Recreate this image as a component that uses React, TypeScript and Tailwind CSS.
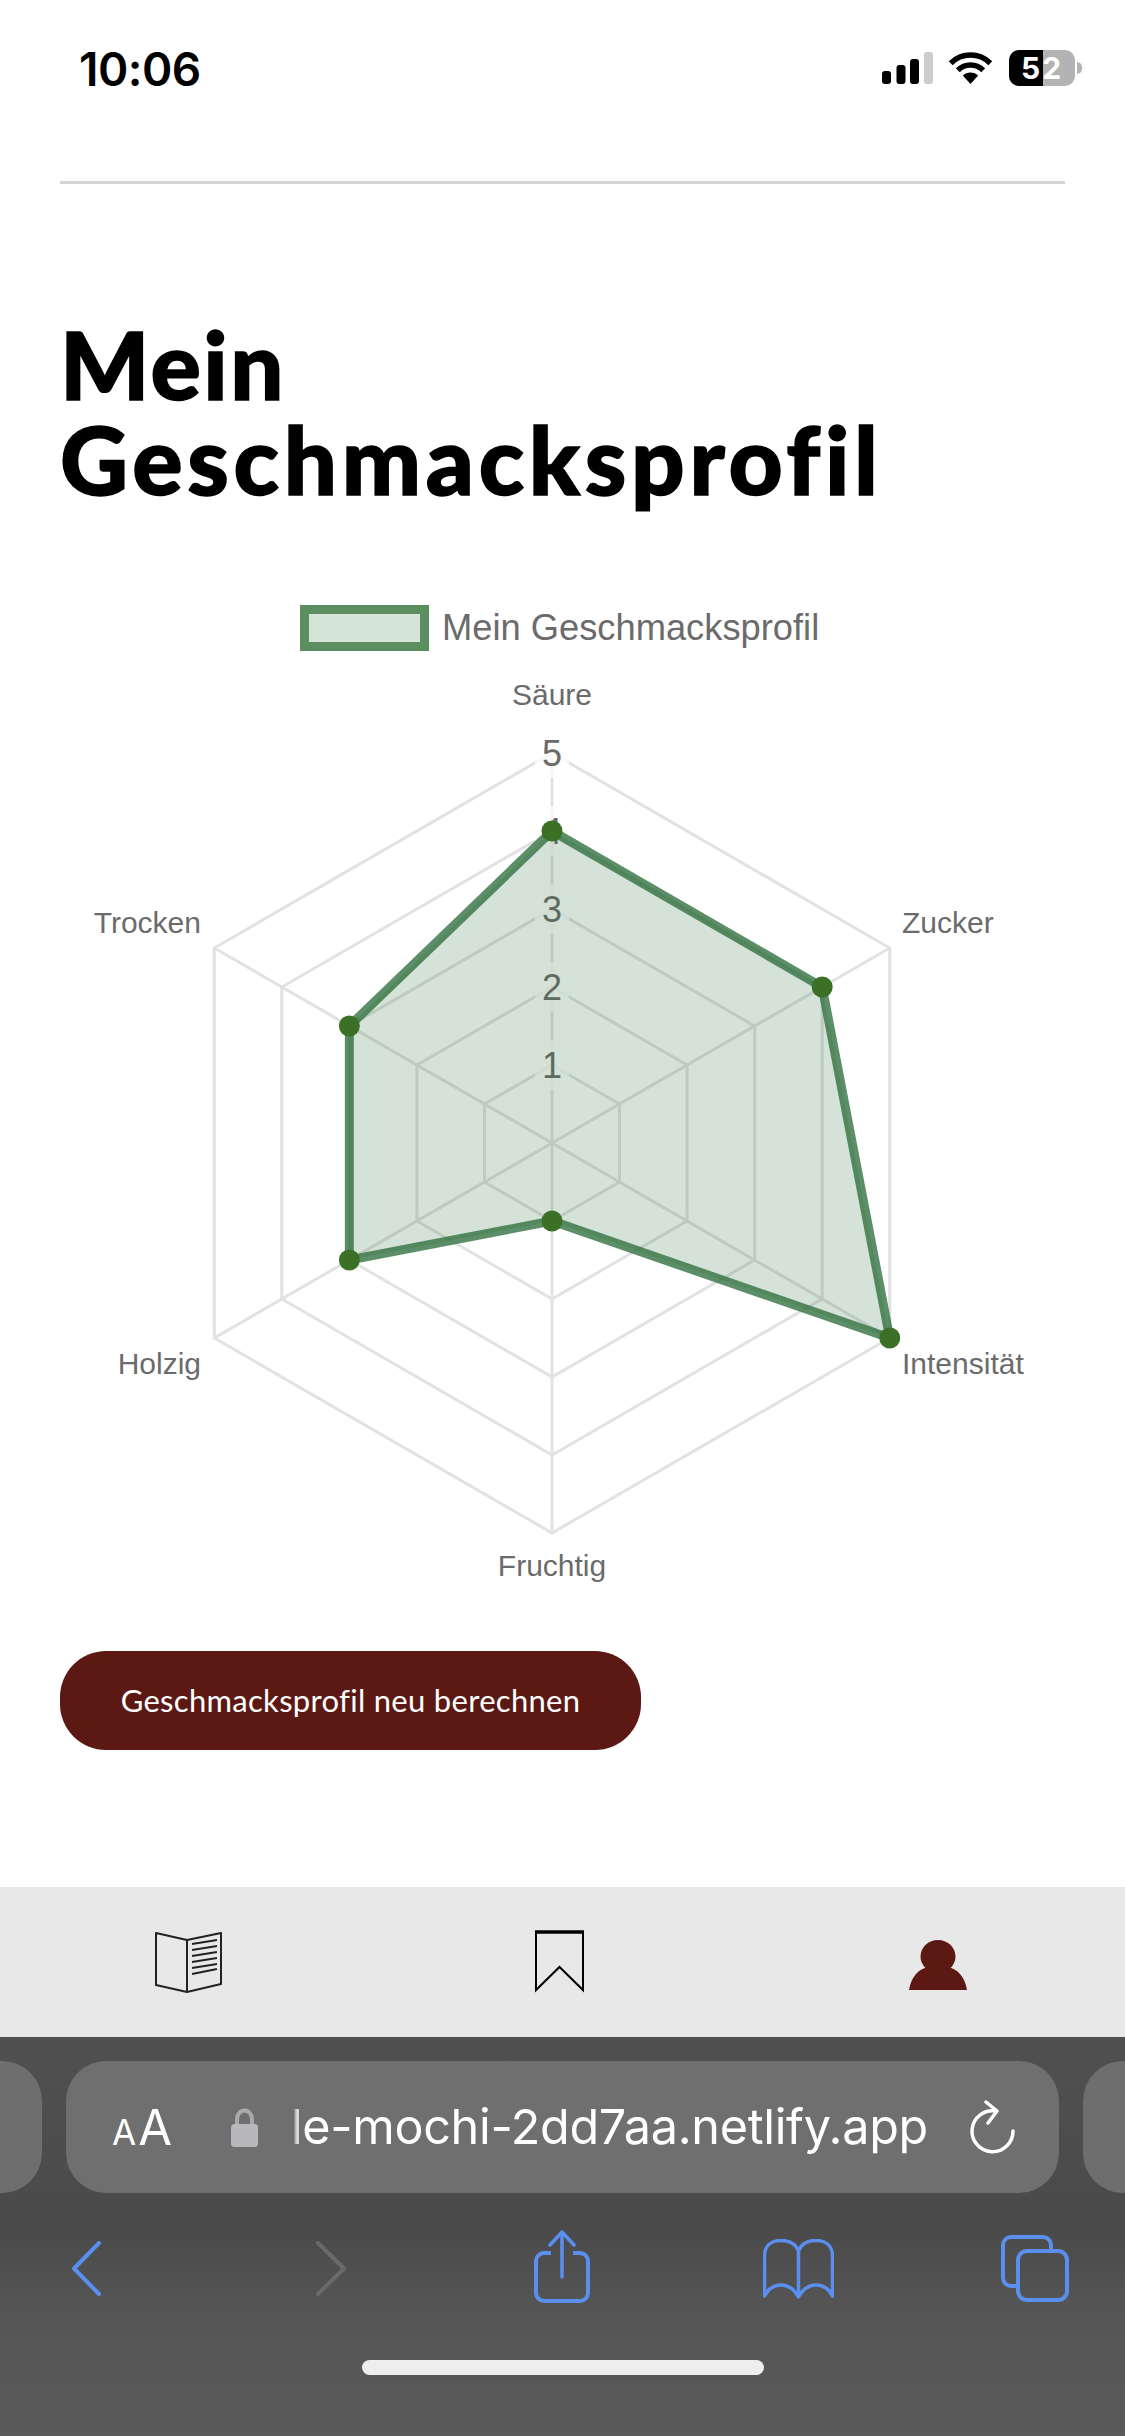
import React from "react";

const cx = 552;
const cy = 1143;
const R = 390;
const angles = [0, 1, 2, 3, 4, 5].map((i) => (i * Math.PI) / 3);
const pt = (i: number, v: number) => {
  const r = (R * v) / 5;
  return [cx + r * Math.sin(angles[i]), cy - r * Math.cos(angles[i])];
};
const ring = (v: number) => angles.map((_, i) => pt(i, v).join(",")).join(" ");
const data = [4, 4, 5, 1, 3, 3];
const dataPts = data.map((v, i) => pt(i, v));

const labels = [
  { t: "Säure", x: 552, y: 705, a: "middle" },
  { t: "Zucker", x: 902, y: 933, a: "start" },
  { t: "Intensität", x: 902, y: 1374, a: "start" },
  { t: "Fruchtig", x: 552, y: 1576, a: "middle" },
  { t: "Holzig", x: 201, y: 1374, a: "end" },
  { t: "Trocken", x: 201, y: 933, a: "end" },
];

function Radar() {
  return (
    <svg viewBox="0 660 1125 940" className="block w-[1125px] h-[940px]" fontFamily="'Liberation Sans', sans-serif">
      {[1, 2, 3, 4, 5].map((v) => (
        <polygon key={v} points={ring(v)} fill="none" stroke="#e2e2e2" strokeWidth="3" />
      ))}
      {angles.map((_, i) => {
        const [x, y] = pt(i, 5);
        return <line key={i} x1={cx} y1={cy} x2={x} y2={y} stroke="#e2e2e2" strokeWidth="3" />;
      })}
      {[1, 2, 3, 4, 5].map((v) => {
        const y = cy - (R * v) / 5;
        return (
          <g key={v}>
            <rect x={cx - 17} y={y - 25} width="34" height="50" fill="#ffffff" fillOpacity="0.75" />
            <text x={cx} y={y + 13} textAnchor="middle" fontSize="36" fill="#6b6b6b">
              {v}
            </text>
          </g>
        );
      })}
      <polygon
        points={dataPts.map((p) => p.join(",")).join(" ")}
        fill="#2e6e3c"
        fillOpacity="0.2"
        stroke="#2e6e3c"
        strokeOpacity="0.78"
        strokeWidth="9"
        strokeLinejoin="miter"
      />
      {dataPts.map((p, i) => (
        <circle key={i} cx={p[0]} cy={p[1]} r="10.5" fill="#3b7026" />
      ))}
      {labels.map((l) => (
        <text key={l.t} x={l.x} y={l.y} textAnchor={l.a as "start" | "middle" | "end"} fontSize="30" fill="#6b6b6b">
          {l.t}
        </text>
      ))}
    </svg>
  );
}

function StatusBar() {
  return (
    <div className="h-[181px] flex items-start justify-between pt-[45px] pl-[79px] pr-[43px]">
      <span className="font-['Inter',sans-serif] font-semibold text-[46px] leading-[48px] text-black tracking-[-0.5px]">10:06</span>
      <div className="flex items-center pt-[5px]">
        <svg width="52" height="34" viewBox="0 0 52 34">
          <rect x="0" y="20" width="9" height="13" rx="3" fill="#000" />
          <rect x="14.5" y="14" width="9" height="19" rx="3" fill="#000" />
          <rect x="28" y="8" width="9" height="25" rx="3" fill="#000" />
          <rect x="42" y="1" width="9" height="32" rx="3" fill="#cdcdcd" />
        </svg>
        <svg width="45" height="32" viewBox="0 0 45 32" className="ml-[14px]">
          <path d="M22.5 32 L14.8 23.6 A11 11 0 0 1 30.2 23.6 Z" fill="#000" />
          <path d="M9.8 18.3 A18 18 0 0 1 35.2 18.3" fill="none" stroke="#000" strokeWidth="5.5" />
          <path d="M2.7 11.2 A28 28 0 0 1 42.3 11.2" fill="none" stroke="#000" strokeWidth="5.5" />
        </svg>
        <div className="flex items-center gap-[2px] ml-[16px]">
          <div className="relative w-[66px] h-[36px] rounded-[10px] overflow-hidden flex bg-[#b3b3b3]">
            <div className="w-[34px] h-full bg-black" />
            <span className="absolute inset-0 flex items-center justify-center font-['Inter',sans-serif] font-bold text-[30px] tracking-[2px] text-white">52</span>
          </div>
          <div className="w-[5px] h-[12px] rounded-r-full bg-[#b3b3b3]" />
        </div>
      </div>
    </div>
  );
}

function NavBar() {
  return (
    <div className="h-[150px] bg-[#e8e8e8] grid grid-cols-3 items-center justify-items-center">
      <svg width="67" height="61" viewBox="0 0 67 61" fill="none" stroke="#222" strokeWidth="2" className="ml-[2px]">
        <path d="M1 1 L32 8 L66 1 V52 L32 60 L1 53 Z" strokeLinejoin="round" />
        <path d="M32 8 V60" />
        <path d="M37 12 L62 8 M37 18 L62 14 M37 24 L62 20 M37 30 L62 26 M37 36 L62 32 M37 42 L62 37" strokeWidth="1.8" />
      </svg>
      <svg width="49" height="64" viewBox="0 0 49 64" fill="none" stroke="#000" strokeWidth="2" className="mr-[6px]">
        <path d="M1 2 H48 V60 L24.5 37 L1 60 Z" />
        <path d="M0 2 H49" strokeWidth="3.5" />
      </svg>
      <svg width="58" height="50" viewBox="0 0 58 50" fill="#5c1914" className="mt-[6px]">
        <ellipse cx="29" cy="16.5" rx="17.5" ry="16.5" />
        <path d="M0 50 C2 37 10 28 20 27 H38 C48 28 56 37 58 50 Z" />
      </svg>
    </div>
  );
}

function UrlRow() {
  return (
    <div className="h-[132px] mt-[24px] flex gap-[24px] overflow-hidden">
      <div className="w-[42px] shrink-0 rounded-r-[40px] bg-[#6e6e6e]" />
      <div className="w-[993px] shrink-0 rounded-[40px] bg-[#6f6f6f] flex items-center text-white pl-[46px] font-['Inter',sans-serif]">
        <span className="flex items-baseline leading-none w-[58px]">
          <span className="text-[35px] mr-[2px]">A</span>
          <span className="text-[49px]">A</span>
        </span>
        <svg width="27" height="39" viewBox="0 0 27 39" className="ml-[61px]">
          <path d="M6 17 V11 A7.5 8.5 0 0 1 21 11 V17" fill="none" stroke="#a9a9ae" strokeWidth="4" />
          <rect x="0" y="16" width="27" height="23" rx="3.5" fill="#b7b7bc" />
        </svg>
        <div className="ml-[24px] w-[646px] overflow-hidden flex justify-end [mask-image:linear-gradient(90deg,transparent_0,transparent_10px,black_17px)]">
          <span className="text-[48.5px] leading-[60px] whitespace-nowrap tracking-[-0.3px]">able-mochi-2dd7aa.netlify.app</span>
        </div>
        <svg width="47" height="54" viewBox="0 0 47 54" fill="none" stroke="#fff" strokeWidth="3.5" strokeLinecap="round" strokeLinejoin="round" className="ml-[41px]">
          <path d="M27 11 A20.5 20.5 0 1 0 44 31" />
          <path d="M17 2 L28 11 L19 23" />
        </svg>
      </div>
      <div className="flex-1 rounded-l-[40px] bg-[#6e6e6e]" />
    </div>
  );
}

function Toolbar() {
  const blue = "#5a8ff0";
  return (
    <div className="flex items-start pl-[72px] pt-[37px] h-[73px]">
      <svg width="29" height="55" viewBox="0 0 29 55" fill="none" stroke={blue} strokeWidth="4" strokeLinecap="round" strokeLinejoin="round" className="mt-[11px]">
        <path d="M27 2 L2 27.5 L27 53" />
      </svg>
      <svg width="30" height="55" viewBox="0 0 30 55" fill="none" stroke="#6a6a6a" strokeWidth="4" strokeLinecap="round" strokeLinejoin="round" className="mt-[11px] ml-[215px]">
        <path d="M2 2 L28 27.5 L2 53" />
      </svg>
      <svg width="56" height="73" viewBox="0 0 56 73" fill="none" stroke={blue} strokeWidth="3.5" strokeLinecap="round" className="ml-[188px]">
        <path d="M17 23 H10 A8 8 0 0 0 2 31 V63 A8 8 0 0 0 10 71 H46 A8 8 0 0 0 54 63 V31 A8 8 0 0 0 46 23 H39" strokeLinecap="butt" strokeWidth="4" />
        <path d="M28 47 V2 M16 15 L28 2 L40 15" strokeLinejoin="round" />
      </svg>
      <svg width="71" height="60" viewBox="0 0 71 60" fill="none" stroke={blue} strokeWidth="3.5" strokeLinejoin="round" className="ml-[173px] mt-[9px]">
        <path d="M35.5 58 C31 50 25 46 18 46 C11 46 5 50 1.5 57 V17 C1.5 7 8 1.5 18 1.5 C27 1.5 33 6 35.5 12 C38 6 44 1.5 53 1.5 C63 1.5 69.5 7 69.5 17 V57 C66 50 60 46 53 46 C46 46 40 50 35.5 58 Z M35.5 12 V58" />
      </svg>
      <svg width="68" height="67" viewBox="0 0 68 67" fill="none" stroke={blue} strokeWidth="4" className="ml-[167px] mt-[5px]">
        <path d="M15 51 H10 A8 8 0 0 1 2 43 V10 A8 8 0 0 1 10 2 H42 A8 8 0 0 1 50 10 V14" />
        <rect x="17" y="16" width="49" height="49" rx="9" />
      </svg>
    </div>
  );
}

export default function App() {
  return (
    <div className="w-[1125px] h-[2436px] bg-white flex flex-col overflow-hidden">
      <StatusBar />
      <div className="mx-[60px] h-[3px] bg-[#d4d4d4]" />
      <h1 className="mt-[132px] px-[60px] font-['Lato',sans-serif] font-black text-[94px] leading-[95px] [-webkit-text-stroke:1.5px_black] text-black">
        <span className="block tracking-[2.5px]">Mein</span>
        <span className="block tracking-[4.7px]">Geschmacksprofil</span>
      </h1>
      <div className="mt-[99px] flex items-center pl-[300px] h-[46px]">
        <div className="w-[129px] h-[46px] border-[9px] border-[#5b8f60] bg-[#d5e4d8]" />
        <span className="ml-[13px] font-['Liberation_Sans',sans-serif] text-[36.3px] leading-none text-[#6b6b6b]">Mein Geschmacksprofil</span>
      </div>
      <div className="mt-[9px]">
        <Radar />
      </div>
      <div className="px-[60px] mt-[51px]">
        <button className="w-[581px] h-[99px] rounded-[46px] bg-[#5c1914] text-white font-['Lato',sans-serif] text-[31px] tracking-[0.3px]">
          Geschmacksprofil neu berechnen
        </button>
      </div>
      <div className="flex-1" />
      <NavBar />
      <div className="h-[399px] bg-[linear-gradient(180deg,#505050_0%,#4a4a4a_48%,#565656_70%,#5a5a5a_100%)]">
        <UrlRow />
        <Toolbar />
        <div className="mt-[94px] mx-auto w-[402px] h-[15px] rounded-full bg-[#eeeeee]" />
      </div>
    </div>
  );
}
